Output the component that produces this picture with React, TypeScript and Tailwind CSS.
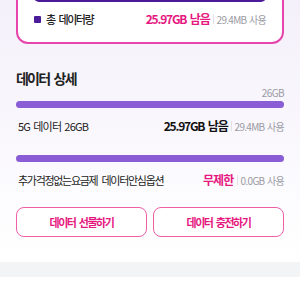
export default function App() {
  const font = { fontFamily: '"Noto Sans CJK KR", "Noto Sans", sans-serif' };

  return (
    <div style={font} className="w-[300px] h-[300px] overflow-hidden bg-white text-[#222] [word-spacing:3px]">
      <div className="bg-gradient-to-b from-[#f3effa] to-white px-4 pb-[25px]">
        {/* 전체 데이터 카드 */}
        <div className="-mt-5 rounded-xl border-2 border-[#e645ad] bg-white px-4 pt-[10px] pb-[14px]">
          <div className="h-[10px] rounded-full bg-[#4b1b99]" />
          <div className="mt-2 flex h-[18px] items-center justify-between">
            <div className="flex items-center gap-[5px]">
              <span className="h-[7px] w-[7px] rounded-[1px] bg-[#4b1b99]" />
              <span className="text-[11px] font-medium tracking-[-1.5px]">총 데이터량</span>
            </div>
            <div className="flex items-center">
              <span className="text-[12px] font-bold tracking-[-1.2px] text-[#e6177f] [word-spacing:2px]">25.97GB 남음</span>
              <span className="mx-[3px] h-[10px] w-px bg-[#e2e2e6]" />
              <span className="text-[10px] tracking-[-0.7px] text-[#9a9aa2] [word-spacing:1px]">29.4MB 사용</span>
            </div>
          </div>
        </div>

        <h2 className="mt-[26px] h-[16px] text-[14px] font-bold leading-[16px] tracking-[-1.8px]">데이터 상세</h2>

        <div className="h-[14px] text-right text-[10px] leading-[14px] tracking-[-0.6px] text-[#9a9aa2]">26GB</div>
        <div className="mt-px h-[7px] rounded-full bg-[#8a5cd6]" />
        <div className="mt-[9px] flex h-[18px] items-center justify-between pl-0.5">
          <span className="text-[11px] tracking-[-0.8px] [word-spacing:1.5px]">5G 데이터 26GB</span>
          <div className="flex items-center">
            <span className="text-[12px] font-bold tracking-[-1.2px] text-[#111] [word-spacing:2px]">25.97GB 남음</span>
            <span className="mx-[3px] h-[10px] w-px bg-[#e2e2e6]" />
            <span className="text-[10px] tracking-[-0.7px] text-[#9a9aa2] [word-spacing:1px]">29.4MB 사용</span>
          </div>
        </div>

        <div className="mt-[20px] h-[7px] rounded-full bg-[#8a5cd6]" />
        <div className="mt-[9px] flex h-[18px] items-center justify-between pl-0.5">
          <span className="text-[11px] tracking-[-1.3px]">추가걱정없는요금제 데이터안심옵션</span>
          <div className="flex items-center">
            <span className="text-[12px] font-bold tracking-[-0.8px] text-[#e6177f]">무제한</span>
            <span className="mx-[3px] h-[10px] w-px bg-[#e2e2e6]" />
            <span className="text-[10px] tracking-[-0.7px] text-[#9a9aa2] [word-spacing:1px]">0.0GB 사용</span>
          </div>
        </div>

        <div className="mt-[18px] grid grid-cols-2 gap-[6px]">
          <button className="h-[30px] rounded-lg border border-[#ee5fa6] bg-white text-[11px] font-bold tracking-[-1.4px] text-[#e6177f] [word-spacing:2px]">
            데이터 선물하기
          </button>
          <button className="h-[30px] rounded-lg border border-[#ee5fa6] bg-white text-[11px] font-bold tracking-[-1.4px] text-[#e6177f] [word-spacing:2px]">
            데이터 충전하기
          </button>
        </div>
      </div>
      <div className="h-[15px] bg-[#f3f4f6]" />
    </div>
  );
}
